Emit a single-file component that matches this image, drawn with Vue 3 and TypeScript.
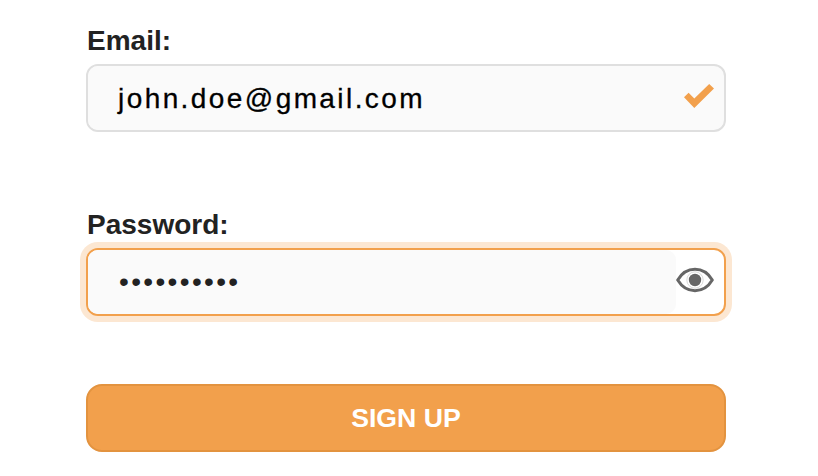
<script setup lang="ts">
import { ref } from 'vue'

const email = ref<string>('john.doe@gmail.com')
const password = ref<string>('sunflowers')
const revealed = ref<boolean>(false)
</script>

<template>
  <form class="signup" @submit.prevent>
    <label class="label" for="email">Email:</label>
    <div class="field">
      <input id="email" v-model="email" class="input" type="text" spellcheck="false" />
      <svg class="check" width="30" height="24" viewBox="0 0 30 24" aria-hidden="true">
        <path d="M0 13.300 4.600 8.800 10.300 14.500 25.200 0 30 4.600 10.300 24Z" fill="#f2a04c" />
      </svg>
    </div>

    <label class="label" for="password">Password:</label>
    <div class="field active">
      <input
        id="password"
        v-model="password"
        class="input secret"
        :type="revealed ? 'text' : 'password'"
      />
      <button class="toggle" type="button" @click="revealed = !revealed">
        <svg width="38" height="26" viewBox="0 0 38 26" aria-hidden="true">
          <path
            d="M1.700 13C6 5.800 12 2.300 19 2.300s13 3.500 17.300 10.700C32 20.200 26 23.700 19 23.700S6 20.200 1.700 13Z"
            fill="none"
            stroke="#666"
            stroke-width="3"
            stroke-linejoin="round"
          />
          <circle cx="19" cy="13" r="8.200" fill="none" stroke="#cfcfcf" stroke-width="0.800" />
          <circle cx="19" cy="13" r="6.200" fill="#666" />
        </svg>
      </button>
    </div>

    <button class="submit" type="submit">SIGN UP</button>
  </form>
</template>

<style>
body {
  background: #fff;
}
</style>

<style scoped>
.signup {
  display: flex;
  flex-direction: column;
  width: 640px;
  padding: 25px 0 0 86px;
  font-family: 'Liberation Sans', Arial, sans-serif;
}

.label {
  height: 32px;
  margin: 0 0 7px 1px;
  color: #222;
  font-size: 28px;
  font-weight: 700;
  line-height: 32px;
}

.field {
  display: flex;
  align-items: center;
  box-sizing: border-box;
  height: 68px;
  margin-bottom: 77px;
  border: 2px solid #dfdfdf;
  border-radius: 12px;
  background: #fafafa;
}

.field.active {
  margin-bottom: 68px;
  border-color: #f2a04c;
  background: #fff;
  box-shadow: 0 0 0 6px #fce7d2;
}

.input {
  flex: 1;
  box-sizing: border-box;
  min-width: 0;
  height: 64px;
  padding: 2px 0 0 26px;
  border: 0;
  border-radius: 10px;
  outline: 0;
  background: #fafafa;
  color: #000;
  font: 28px 'Liberation Sans', Arial, sans-serif;
  letter-spacing: 2.42px;
  text-indent: 4px;
  -webkit-text-stroke: 0.3px #000;
}

.secret {
  padding: 0 0 0 27px;
  color: #222;
  letter-spacing: 2.35px;
  -webkit-text-stroke: 0;
}

.check {
  flex: none;
  margin: 0 10px 4px 0;
}

.toggle {
  display: flex;
  margin: 0 10px 4px 0;
  padding: 0;
  border: 0;
  background: none;
}

.submit {
  height: 68px;
  padding: 0;
  border: 2px solid #e3933f;
  border-radius: 16px;
  background: #f2a04c;
  color: #fff;
  font: 700 26.67px 'Liberation Sans', Arial, sans-serif;
}
</style>
